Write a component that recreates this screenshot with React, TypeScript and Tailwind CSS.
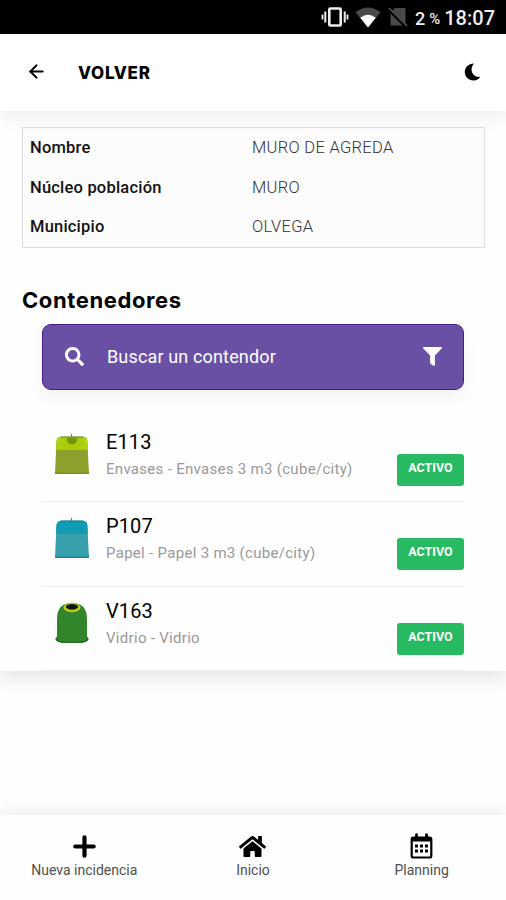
import type { ReactNode } from "react";
import { FiArrowLeft } from "react-icons/fi";
import { FaFilter, FaHome, FaSearch } from "react-icons/fa";

type Container = {
  code: string;
  description: string;
  status: string;
  icon: ReactNode;
};

const details = [
  { label: "Nombre", value: "MURO DE AGREDA" },
  { label: "Núcleo población", value: "MURO" },
  { label: "Municipio", value: "OLVEGA" },
];

const containers: Container[] = [
  {
    code: "E113",
    description: "Envases - Envases 3 m3 (cube/city)",
    status: "ACTIVO",
    icon: <CubeIcon top="#a9cd08" body="#8ca02b" edge="#75951a" knob />,
  },
  {
    code: "P107",
    description: "Papel - Papel 3 m3 (cube/city)",
    status: "ACTIVO",
    icon: <CubeIcon top="#119bb5" body="#389fac" edge="#12849b" />,
  },
  {
    code: "V163",
    description: "Vidrio - Vidrio",
    status: "ACTIVO",
    icon: <IglooIcon />,
  },
];

export default function App() {
  return (
    <div className="flex h-[900px] w-[506px] flex-col overflow-hidden bg-[#fefefe] font-[Roboto,sans-serif] text-black">
      <StatusBar />

      {/* Cabecera */}
      <header className="relative z-10 flex h-[77px] shrink-0 items-center bg-white pl-[26px] pr-[25px] shadow-[0_8px_16px_rgba(0,0,0,0.06)]">
        <FiArrowLeft size={21} strokeWidth={2.4} className="-mt-[2px]" />
        <h1 className="ml-[31px] mt-[1px] font-[Inter,sans-serif] text-[17px] font-extrabold leading-6 tracking-[0.7px]">
          VOLVER
        </h1>
        <MoonIcon />
      </header>

      <main className="h-[560px] shrink-0 bg-[#fefefe] pt-[16px] shadow-[0_8px_18px_rgba(0,0,0,0.10)]">
        <dl className="ml-[22px] mr-[21px] h-[121px] border border-[#dedede] bg-[#fcfcfc] px-[7px] pt-[1px]">
          {details.map((item) => (
            <div key={item.label} className="flex h-[39.5px] items-center text-[16.5px]">
              <dt className="w-[222px] font-medium tracking-[0.2px] text-[#111]">{item.label}</dt>
              <dd className="font-light tracking-[0.3px] text-[#333]">{item.value}</dd>
            </div>
          ))}
        </dl>

        <h2 className="ml-[22px] mt-[38px] h-[38px] font-[Inter,sans-serif] text-[22px] font-bold leading-[29px] tracking-[0.6px]">
          Contenedores
        </h2>

        {/* Buscador */}
        <div className="mx-[42px] flex h-[66px] items-center rounded-[9px] border-[1.5px] border-[#471a8e] bg-[#6a50a5] pb-[2px] pl-[22px] pr-[21px] text-white shadow-[0_8px_16px_rgba(0,0,0,0.05)]">
          <FaSearch size={19} />
          <span className="ml-[23px] text-[18px] tracking-[0.15px]">Buscar un contendor</span>
          <FaFilter size={19} className="ml-auto" />
        </div>

        <ul className="mx-[42px] mt-[28px]">
          {containers.map((container) => (
            <ContainerRow key={container.code} container={container} />
          ))}
        </ul>
      </main>

      <nav className="mt-auto grid h-[85px] shrink-0 grid-cols-3 bg-[#fefefe] shadow-[0_-6px_14px_rgba(0,0,0,0.06)]">
        <NavItem label="Nueva incidencia" icon={<PlusIcon />} />
        <NavItem label="Inicio" icon={<FaHome size={27} />} />
        <NavItem label="Planning" icon={<CalendarIcon />} />
      </nav>
    </div>
  );
}

const ContainerRow = ({ container }: { container: Container }) => {
  return (
    <li className="flex h-[84.4px] border-b border-[#eeeeee]">
      <div className="ml-[12px] mt-[15px] w-[36px]">{container.icon}</div>
      <div className="ml-[16px] pt-[11px]">
        <p className="text-[20px] leading-[26px] tracking-[0.1px]">{container.code}</p>
        <p className="mt-[3px] text-[15px] leading-[22px] tracking-[0.3px] text-[#999]">
          {container.description}
        </p>
      </div>
      <span className="ml-auto mt-[36px] h-[32px] w-[67px] rounded-[3px] bg-[#27ba61] text-center text-[12.5px] font-bold leading-[27px] text-white">
        {container.status}
      </span>
    </li>
  );
};

const NavItem = ({ label, icon }: { label: string; icon: ReactNode }) => {
  return (
    <a className="flex flex-col items-center pt-[17px]">
      <span className="flex h-[28px] items-center">{icon}</span>
      <span className="text-[14px] leading-[20px] text-[#505050]">{label}</span>
    </a>
  );
};

const MoonIcon = () => (
  <svg width="17" height="18" viewBox="0 0 17 18" className="-mt-[2px] ml-auto">
    <path d="M10 .5C7.200 3.300 6.800 8 9 11C10.700 13.300 13.400 14.200 16.200 13.800C14.700 16.400 12.200 17.600 9.500 17.500C4.500 17.400 .8 13.700 .8 9C.8 4.300 4.600 .7 10 .5Z" />
  </svg>
);

const PlusIcon = () => (
  <svg width="23" height="23" viewBox="0 0 23 23" stroke="#000" strokeWidth="4.200" strokeLinecap="round">
    <path d="M11.500 2.300v18.400M2.300 11.500h18.400" />
  </svg>
);

const CalendarIcon = () => (
  <svg width="23" height="26" viewBox="0 0 23 26">
    <rect x="1.700" y="4.500" width="19.600" height="20" rx="1.800" fill="none" stroke="#000" strokeWidth="2.200" />
    <path d="M1.500 4h20v4.500h-20Z" />
    <path d="M6.500 1.700v4M16.500 1.700v4" stroke="#000" strokeWidth="2.800" strokeLinecap="round" />
    <path
      d="M5 11.500h3v3H5ZM10 11.500h3v3h-3ZM15 11.500h3v3h-3ZM5 16.500h3v3H5ZM10 16.500h3v3h-3ZM15 16.500h3v3h-3Z"
    />
  </svg>
);

// Barra de estado
const StatusBar = () => {
  return (
    <div className="flex h-[34px] shrink-0 items-center justify-end bg-black pr-[11px] text-[#eee]">
      <svg width="28" height="22" viewBox="0 0 28 22" fill="none" stroke="#eee">
        <rect x="8.3" y="2.5" width="11.4" height="17" rx="1" strokeWidth="2.6" />
        <path d="M4.3 5.5v11M23.7 5.5v11" strokeWidth="2" />
        <path d="M1.5 8.5v5M26.5 8.5v5" strokeWidth="1.8" />
      </svg>
      <svg width="26" height="21" viewBox="0 0 26 21" className="ml-[6px]">
        <path d="M0.5 5.2Q13-4.2 25.5 5.2L13 20.5Z" fill="#494949" />
        <path d="M5.3 10.7Q13 5 20.7 10.7L13 20.5Z" fill="#fff" />
      </svg>
      <svg width="20" height="20" viewBox="0 0 20 20" className="ml-[7px]">
        <path d="M7 1h9.500a1 1 0 0 1 1 1v16.500H2.500V5.500Z" fill="#494949" />
        <path d="M0 1.500 18.500 20" stroke="#000" strokeWidth="3.500" />
        <path d="M1 1 19 19" stroke="#555" strokeWidth="1.600" />
      </svg>
      <span className="ml-[7px] mt-[3px] text-[18px] font-medium">2</span>
      <span className="ml-[4px] mt-[4px] text-[15px] font-medium">%</span>
      <span className="ml-[4px] mt-[2px] text-[20px] font-medium">18:07</span>
    </div>
  );
};

// Contenedor tipo cubo
function CubeIcon({
  top,
  body,
  edge,
  knob,
}: {
  top: string;
  body: string;
  edge: string;
  knob?: boolean;
}) {
  return (
    <svg width="36" height="42" viewBox="0 0 36 42">
      <path d="M17.500 1v4" stroke="#6c8068" strokeWidth="1.200" />
      <path d="M7 4h22q4 0 4.300 4L35 41H1L2.500 8Q3 4 7 4Z" fill={body} />
      <path d="M7 4h22q4 0 4.300 4L33.900 17H2L2.500 8Q3 4 7 4Z" fill={top} />
      <path d="M6.500 4h23" stroke={edge} strokeWidth="1.300" />
      {knob && (
        <>
          <path d="M13 4.500h10v3q0 3-5 4-5-1-5-4Z" fill="#789510" />
          <path d="M5 6Q3 13 8 15M31 6Q33 13 28 15" fill="none" stroke="#bfe01c" strokeWidth="1" />
        </>
      )}
      <path d="M1 40.300h34" stroke={edge} strokeWidth="1.400" />
    </svg>
  );
}

// Iglú de vidrio
function IglooIcon() {
  return (
    <svg width="36" height="42" viewBox="0 0 36 42">
      <path
        d="M10 2.500Q18-1 26 2.500Q33 6 33 17V34L34.500 37Q34.500 41 18 41T1.500 37L3 34V17Q3 6 10 2.500Z"
        fill="#31862c"
      />
      <path d="M2 36Q3 40 9 40.300H27Q33 40 34 36" fill="none" stroke="#236c25" strokeWidth="1.300" />
      <ellipse cx="18" cy="5.500" rx="8.500" ry="4.700" fill="#c2cc20" />
      <ellipse cx="18" cy="4.800" rx="6.200" ry="2.900" fill="#0b180b" />
    </svg>
  );
}
